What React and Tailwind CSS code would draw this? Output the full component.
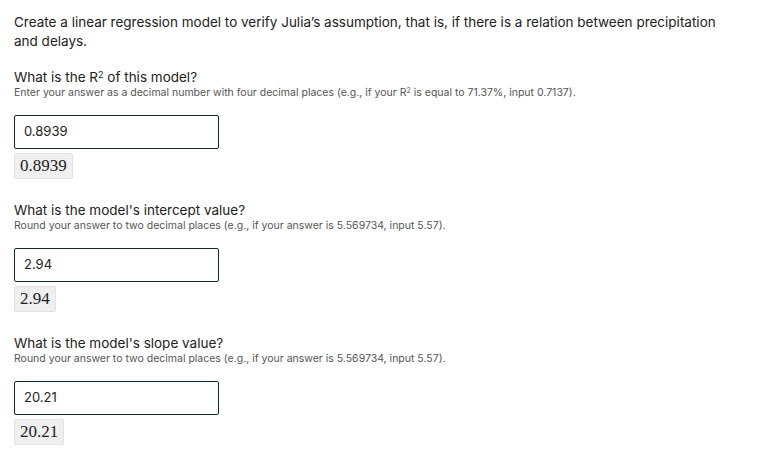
import React from 'react';

function Question({ title, hint, value, last }) {
    return (
        <section className={last ? '' : 'mb-[22px]'}>
            <h2 className="text-[13.5px] leading-[18px] text-[#222222]">{title}</h2>
            <p className="text-[10.5px] leading-[13px] text-[#555555]">{hint}</p>
            <div className="mt-[16px] w-[205px] h-[34px] border-[1.5px] border-[#0c2c31] rounded-[2px] flex items-center px-[9px] text-[13px] text-[#222222]">
                {value}
            </div>
            <div
                className="mt-[4px] h-[26px] inline-flex items-center bg-[#efefef] border border-[#e2e2e2] rounded-[2px] px-[5px] text-[17px] text-[#222222]"
                style={{ fontFamily: '"Liberation Serif", serif' }}
            >
                {value}
            </div>
        </section>
    );
}

export default function App() {
    return (
        <div className="min-h-screen bg-white px-[14px] pt-[13px]" style={{ fontFamily: 'Inter, "Liberation Sans", sans-serif' }}>
            <p className="text-[13.5px] leading-[19px] text-[#222222] max-w-[725px]">
                Create a linear regression model to verify Julia’s assumption, that is, if there is a relation between precipitation and delays.
            </p>

            <div className="mt-[17px]">
                <Question
                    title={<>What is the R<sup className="text-[9px] leading-none">2</sup> of this model?</>}
                    hint={<>Enter your answer as a decimal number with four decimal places (e.g., if your R<sup className="text-[7px] leading-none">2</sup> is equal to 71.37%, input 0.7137).</>}
                    value="0.8939"
                />
                <Question
                    title="What is the model's intercept value?"
                    hint="Round your answer to two decimal places (e.g., if your answer is 5.569734, input 5.57)."
                    value="2.94"
                />
                <Question
                    title="What is the model's slope value?"
                    hint="Round your answer to two decimal places (e.g., if your answer is 5.569734, input 5.57)."
                    value="20.21"
                    last
                />
            </div>
        </div>
    );
}
